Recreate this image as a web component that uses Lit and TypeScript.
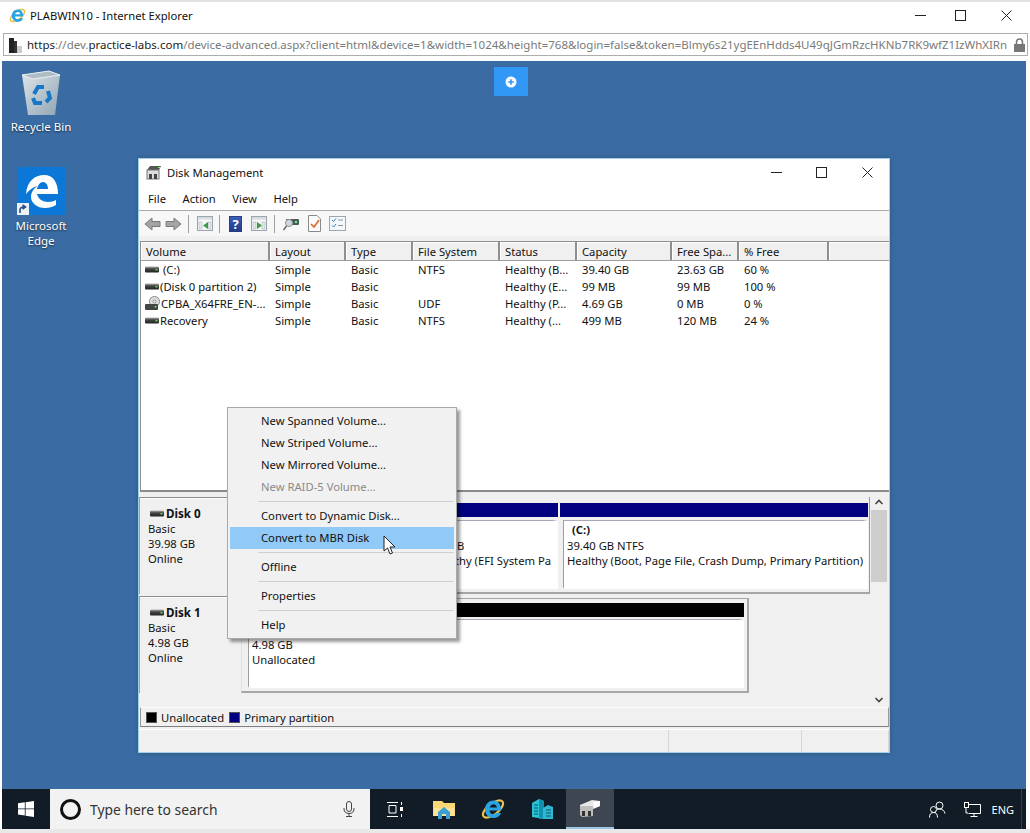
import { LitElement, html, css } from "lit";
import { customElement } from "lit/decorators.js";

const diskIcon = html`<svg class="dk" width="14" height="7" viewBox="0 0 14 7"><defs><linearGradient id="dg" x1="0" y1="0" x2="0" y2="1"><stop offset="0" stop-color="#b5b5b5"/><stop offset=".4" stop-color="#444"/><stop offset="1" stop-color="#222"/></linearGradient></defs><rect width="14" height="6" y=".5" rx="1" fill="url(#dg)"/><rect x="10.5" y="3" width="2" height="1.5" fill="#5fd35f"/></svg>`;
const ieLogo = (s: number) => html`<svg width=${s} height=${s} viewBox="0 0 24 24"><ellipse cx="12" cy="12" rx="12" ry="5.5" transform="rotate(-38 12 12)" fill="none" stroke="#e8c24a" stroke-width="2.2"/><path d="M4.5 13.4 H20 C20.3 7 16.8 3.5 12.5 3.5 C7.5 3.5 4 7.5 4 12.5 C4 17.5 7.7 21 12.5 21 C16 21 18.8 19.3 20 16 H15 C14.3 17 13.5 17.3 12.4 17.3 C10 17.3 8.6 15.6 8.6 13.4 Z M8.8 10.4 C9 8.6 10.5 7.2 12.4 7.2 C14.4 7.2 15.8 8.6 15.9 10.4 Z" fill="#2aa3e3" fill-rule="evenodd"/></svg>`;
const winIcon = (fill: string, arrow: string) => html`<svg width="16" height="15" viewBox="0 0 16 15"><rect x=".5" y=".5" width="15" height="14" fill="#f7f7f7" stroke="#9aa5ac"/><rect x="1" y="1" width="14" height="2.5" fill="#d6dde2"/><rect x="2" y="6" width="3" height="7" fill="#e2e8ec" stroke="#a3aeb5" stroke-width=".5"/><rect x="11" y="6" width="3" height="7" fill="#e2e8ec" stroke="#a3aeb5" stroke-width=".5"/><path d=${arrow} fill=${fill}/></svg>`;

const volumes = [
  { icon: "d", name: " (C:)", layout: "Simple", type: "Basic", fs: "NTFS", status: "Healthy (B...", cap: "39.40 GB", free: "23.63 GB", pct: "60 %" },
  { icon: "d", name: "(Disk 0 partition 2)", layout: "Simple", type: "Basic", fs: "", status: "Healthy (E...", cap: "99 MB", free: "99 MB", pct: "100 %" },
  { icon: "c", name: "CPBA_X64FRE_EN-...", layout: "Simple", type: "Basic", fs: "UDF", status: "Healthy (P...", cap: "4.69 GB", free: "0 MB", pct: "0 %" },
  { icon: "d", name: "Recovery", layout: "Simple", type: "Basic", fs: "NTFS", status: "Healthy (...", cap: "499 MB", free: "120 MB", pct: "24 %" },
];
const columns = ["Volume", "Layout", "Type", "File System", "Status", "Capacity", "Free Spa...", "% Free", ""];

@customElement("app-root")
export class AppRoot extends LitElement {
  static styles = css`
    :host { display: flex; flex-direction: column; width: 1030px; height: 833px; overflow: hidden; background: #fff; font-family: "Noto Sans", "Open Sans", sans-serif; font-size: 11.25px; color: #111; }
    * { box-sizing: border-box; }
    svg { display: block; flex: none; }
    .ietitle { height: 30px; flex: none; border-top: 2px solid #e2e2e2; display: flex; align-items: center; padding: 0 0 2px 9px; }
    .ietitle .t { margin-left: 4px; flex: 1; }
    .winbtns { display: flex; align-items: center; }
    .ietitle .winbtns { margin-right: 18px; }
    .ietitle .winbtns .b2 { margin: 0 35px 0 29px; }
    .addr { flex: none; height: 23px; margin: 3px 2px 0 3px; border: 1px solid #adadad; display: flex; align-items: center; padding-left: 4px; white-space: nowrap; font-size: 11.5px; color: #7a7a7a; overflow: hidden; }
    .addr .fav { width: 14px; height: 16px; margin-right: 5px; flex: none; }
    .addr .url { flex: 1; overflow: hidden; }
    .addr b { font-weight: 400; color: #222; }
    .addr .lock { margin: 0 2px 0 4px; }
    .gap6 { height: 5px; flex: none; }
    .desktop { position: relative; flex: 1; margin: 0 4px 0 2px; background: #3a6ca3; }
    .rdp { position: absolute; left: 492px; top: 6px; width: 34px; height: 29px; background: #3298f6; display: flex; align-items: center; justify-content: center; }
    .dicon { position: absolute; color: #fff; text-align: center; line-height: 15px; text-shadow: 0 1px 2px #000a; font-size: 11.5px; display: flex; flex-direction: column; align-items: center; }
    .dicon.bin { left: 4px; top: 9px; width: 70px; }
    .dicon.bin svg { margin-bottom: 2px; }
    .dicon.edge { left: 4px; top: 106px; width: 70px; }
    .dicon.edge .tile { width: 48px; height: 48px; margin-bottom: 3px; position: relative; background: #0b78d7; }
    .short { position: absolute; left: 0; bottom: 0; }

    .window { position: absolute; left: 136px; top: 97px; width: 752px; height: 595px; background: #f0f0f0; border: 1px solid #a5cfe8; display: flex; flex-direction: column; box-shadow: 0 0 6px #0003; }
    .wtitle { flex: none; height: 27px; background: #fff; display: flex; align-items: center; padding-left: 7px; }
    .wtitle .t { margin-left: 5px; flex: 1; }
    .wtitle .winbtns { margin-right: 16px; }
    .wtitle .winbtns .b2 { margin: 0 35px 0 34px; }
    .menubar { flex: none; height: 25px; background: #fff; border-bottom: 1px solid #a9a9a9; display: flex; align-items: center; padding: 0 0 0 9px; gap: 16.5px; }
    .toolbar { flex: none; height: 25px; background: #f7f7f7; display: flex; align-items: center; padding-left: 5px; }
    .tsep { width: 1px; height: 18px; background: #a0a0a0; }
    .toolbar .help { width: 13px; height: 16px; background: linear-gradient(#3b5db8, #233a88); color: #fff; font-weight: 700; font-size: 13px; line-height: 15px; text-align: center; flex: none; border: 1px solid #28407f; }
    .spacer5 { flex: none; height: 5px; }
    .list { flex: none; height: 251px; margin: 0 0 0 1px; background: #fff; border-top: 1px solid #8e8e8e; border-left: 1px solid #8e8e8e; border-bottom: 2px solid #8a8a8a; position: relative; }
    .cols { display: grid; grid-template-columns: 129px 76px 67px 87px 77px 95px 67px 90px 1fr; }
    .head > div { height: 19px; background: #f0f0f0; border-right: 2px solid #8f8f8f; border-bottom: 1px solid #a0a0a0; box-shadow: inset 1px 1px 0 #fff; padding: 2px 0 0 5px; line-height: 16px; white-space: nowrap; }
    .head > div:last-child { border-right: 0; }
    .row > div { height: 17px; line-height: 17px; padding-left: 5px; white-space: pre; }
    .row > div:first-child { padding-left: 4px; display: flex; align-items: center; gap: 1px; }
    .graph { flex: none; height: 215px; display: flex; }
    .disks { flex: 1; padding-top: 5px; min-width: 0; }
    .drow { display: flex; height: 97px; }
    .drow + .drow { margin-top: 2px; }
    .dlabel { width: 102px; flex: none; border-top: 1px solid #8e8e8e; border-left: 1px solid #a0a0a0; box-shadow: inset 0 1px 0 #fff; padding: 8px 0 0 8px; line-height: 15px; }
    .dlabel .name { font-weight: 700; display: flex; align-items: center; gap: 2px; margin: 0 0 0 2px; height: 15px; font-size: 11.6px; }
    .parts { flex: 1; min-width: 0; display: flex; border-right: 1px solid #9a9a9a; border-bottom: 2px solid #a6a6a6; padding: 6px 1px 3px 6px; gap: 2px; }
    .parts.d1 { flex: none; width: 508px; margin-top: 2px; border-top: 1px solid #a6a6a6; border-right: 2px solid #a6a6a6; border-left: 1px solid #e0e0e0; padding: 4px 3px 3px 6px; }
    .part { display: flex; flex-direction: column; min-width: 0; }
    .p1 { width: 170px; }
    .p2 { width: 139px; }
    .p3 { flex: 1; }
    .phead { height: 14px; background: #000080; flex: none; }
    .parts.d1 .phead { background: #000; }
    .pbody { flex: 1; margin: 3px 0 0 3px; border: solid #fff; border-width: 1px 5px 2px 1px; border-top-color: #a8a8b8; border-left-color: #9c9c9c; background: #fff; padding: 1px 0 0 3px; line-height: 15.5px; white-space: nowrap; overflow: hidden; min-width: 0; }
    .p2 .pbody { padding-left: 8px; }
    .parts.d1 .pbody { margin: 2px 0 0; }
    .pbody .bold { font-weight: 700; padding-left: 5px; }
    .scroll { width: 18px; flex: none; margin-right: 1px; display: flex; flex-direction: column; align-items: center; padding-top: 6px; }
    .thumb { width: 16px; height: 72px; background: #cdcdcd; margin: 4px 0 auto; }
    .legend { flex: none; height: 20px; margin-left: 1px; border-top: 1px solid #fff; border-bottom: 1px solid #7f7f7f; border-left: 1px solid #9a9a9a; border-right: 1px solid #9a9a9a; display: flex; align-items: center; padding-left: 5px; }
    .sw { width: 11px; height: 11px; margin-right: 4px; border: 1px solid #555; flex: none; }
    .sw.k { background: #000; }
    .sw.b { background: #000080; margin-left: 5px; }
    .status { flex: 1; margin-top: 2px; display: grid; grid-template-columns: 530px 133px 1fr; border-top: 1px solid #fff; }
    .status div { border-right: 1px solid #d6d6d6; }

    .menu { position: absolute; left: 88px; top: 248px; width: 230px; height: 232px; background: #f1f1f1; border: 1px solid #a9a9a9; box-shadow: 3px 3px 3px #0006; padding: 2px; z-index: 2; }
    .mi { height: 22px; line-height: 22px; padding-left: 31px; white-space: nowrap; }
    .mi.dis { color: #8a8a8a; }
    .mi.hot { background: #91c9f7; line-height: 21px; }
    .msep { height: 1px; background: #cfcfcf; margin: 3px 0 3px 28px; }
    .cursor { position: absolute; left: 244px; top: 376px; z-index: 3; }

    .taskbar { flex: none; height: 40px; margin: 0 4px 0 2px; background: #111c27; display: flex; align-items: center; position: relative; }
    .start { width: 48px; display: flex; justify-content: center; }
    .search { width: 320px; height: 40px; background: #f2f2f2; display: flex; align-items: center; padding-left: 9px; font-size: 13.85px; color: #333; }
    .search .txt { margin-left: 8px; flex: 1; }
    .search .mic { margin-right: 15px; }
    .tb { display: flex; justify-content: center; align-items: center; height: 40px; width: 49px; flex: none; }
    .tb.active { background: #3e4651; width: 48px; border-bottom: 2px solid #9cc8e6; }
    .tray { margin-left: auto; display: flex; align-items: center; color: #fff; font-size: 11px; padding-right: 12px; }
    .tray .net { margin: 0 11px 0 18px; }
    .tsplit { position: absolute; right: 4px; top: 0; width: 1px; height: 40px; background: #333e4a; }
    .bottom { height: 4px; flex: none; background: #e8e8e8; }
  `;

  private winBtns(stroke: string) {
    return html`<div class="winbtns">
      <svg width="11" height="11" viewBox="0 0 11 11"><path d="M0 5.5H11" stroke=${stroke}/></svg>
      <svg class="b2" width="11" height="11" viewBox="0 0 11 11"><rect x=".5" y=".5" width="10" height="10" fill="none" stroke=${stroke}/></svg>
      <svg width="11" height="11" viewBox="0 0 11 11"><path d="M.5 .5L10.5 10.5M10.5 .5L.5 10.5" stroke=${stroke}/></svg>
    </div>`;
  }

  render() {
    return html`
      <div class="ietitle">${ieLogo(17)}<span class="t">PLABWIN10 - Internet Explorer</span>${this.winBtns("#222")}</div>
      <div class="addr">
        <svg class="fav" viewBox="0 0 14 16"><rect x="1" y="1" width="5" height="15" fill="#222"/><rect x="6" y="4" width="3" height="12" fill="#333"/><rect x="9" y="9" width="5" height="7" fill="#ccc"/></svg>
        <span class="url"><b>https</b>://dev.<b>practice-labs.com</b>/device-advanced.aspx?client=html&amp;device=1&amp;width=1024&amp;height=768&amp;login=false&amp;token=Blmy6s21ygEEnHdds4U49qJGmRzcHKNb7RK9wfZ1IzWhXIRn</span>
        <svg class="lock" width="11" height="14" viewBox="0 0 11 14"><path d="M2.5 6V4a3 3 0 0 1 6 0v2" fill="none" stroke="#777" stroke-width="1.6"/><rect y="6" width="11" height="8" fill="#777"/></svg>
      </div>
      <div class="gap6"></div>
      <div class="desktop">
        <div class="rdp"><svg width="12" height="12" viewBox="0 0 12 12"><circle cx="6" cy="6" r="5.5" fill="#fff"/><path d="M3.2 6H8.8M6 3.2V8.8" stroke="#3298f6" stroke-width="1.6"/></svg></div>
        <div class="dicon bin">
          <svg width="40" height="47" viewBox="0 0 40 47"><defs><linearGradient id="rb" x1="0" y1="0" x2="1" y2="1"><stop offset="0" stop-color="#dfe6ea"/><stop offset="1" stop-color="#8fa4b3"/></linearGradient></defs><path d="M1 5 L28 1 L39 5 L34 45 L7 45 Z" fill="url(#rb)"/><path d="M1 5 L28 1 L39 5 L12 9 Z" fill="#aebcc6" stroke="#e9eef1"/><g fill="none" stroke="#1878c8" stroke-width="4"><path d="M13 24 L17 17 L23 17"/><path d="M27 21 L29 28 L25 32"/><path d="M21 33 L14 33 L12 28"/></g></svg>
          <span>Recycle Bin</span>
        </div>
        <div class="dicon edge">
          <div class="tile">
            <svg width="48" height="48" viewBox="0 0 48 48"><path d="M9 27 C10 14 18 8 27 8 C36 8 41 15 41 27 H20 C21 32 26 35 31 35 C34 35 37 34 39 33 V38 C36 40 32 41 28 41 C20 41 14 36 14 30 C14 25 17 21 21 19 C16 20 12 23 9 27 Z M20 22 H31 C31 18 29 15 26 15 C23 15 21 18 20 22 Z" fill="#fff" fill-rule="evenodd"/></svg>
            <svg class="short" width="12" height="12" viewBox="0 0 12 12"><rect width="12" height="12" fill="#eef1f4"/><path d="M3 10 V7 C3 5 5 4 7 4 M5.5 2 L8.5 4 L5.5 6" fill="none" stroke="#2a4f88" stroke-width="1.6"/></svg>
          </div>
          <span>Microsoft<br />Edge</span>
        </div>

        <div class="window">
          <div class="wtitle">
            <svg width="16" height="15" viewBox="0 0 16 15"><path d="M1 5 L4 1 H15 L13 5 Z" fill="#555"/><rect x="1" y="5" width="12" height="9" fill="#ddd" stroke="#777"/><rect x="3" y="9" width="3" height="5" fill="#444"/><rect x="8" y="9" width="3" height="5" fill="#444"/><rect x="12" y="2" width="2" height="1" fill="#7f7"/></svg>
            <span class="t">Disk Management</span>
            ${this.winBtns("#222")}
          </div>
          <div class="menubar"><span>File</span><span>Action</span><span>View</span><span>Help</span></div>
          <div class="toolbar">
            <svg width="17" height="14" viewBox="0 0 17 14"><path d="M8 1 L1 7 L8 13 V9.5 H16 V4.5 H8 Z" fill="#a4a4a4" stroke="#7a7a7a"/></svg>
            <svg style="margin-left:4px" width="17" height="14" viewBox="0 0 17 14"><path d="M9 1 L16 7 L9 13 V9.5 H1 V4.5 H9 Z" fill="#a4a4a4" stroke="#7a7a7a"/></svg>
            <span class="tsep" style="margin:0 8px 0 6px"></span>
            ${winIcon("#3d9a4a", "M11 6 V13 L6 9.5 Z")}
            <span class="tsep" style="margin:0 9px 0 6px"></span>
            <span class="help">?</span>
            <span style="margin-left:9px">${winIcon("#3d9a4a", "M6 6 V13 L11 9.5 Z")}</span>
            <span class="tsep" style="margin:0 8px 0 7px"></span>
            <svg width="16" height="15" viewBox="0 0 16 15"><rect x="3" y="3" width="13" height="6" rx="1" fill="#4c5a5a"/><rect x="12" y="5" width="2" height="2" fill="#6f6"/><circle cx="6" cy="7" r="3.5" fill="#cfd8dc" stroke="#8a9499"/><path d="M3.5 10 L0.5 14" stroke="#666" stroke-width="1.5"/></svg>
            <svg style="margin-left:9px" width="13" height="17" viewBox="0 0 13 17"><path d="M.5 .5H9L12.5 4V16.5H.5Z" fill="#fbfbfb" stroke="#8a8a8a"/><path d="M3 9 L6 12 L11 5" fill="none" stroke="#dc6a2c" stroke-width="1.7"/></svg>
            <svg style="margin-left:8px" width="17" height="15" viewBox="0 0 17 15"><rect x=".5" y=".5" width="16" height="14" fill="#f5f8fb" stroke="#9aa7b0"/><path d="M3 4 L4.5 5.5 L7 2.5 M3 9.5 L4.5 11 L7 8" fill="none" stroke="#3b7fb8"/><path d="M9 4H14M9 9.5H14" stroke="#8a9aa5"/></svg>
          </div>
          <div class="spacer5"></div>
          <div class="list">
            <div class="cols head">${columns.map((c) => html`<div>${c}</div>`)}</div>
            ${volumes.map(
              (v) => html`<div class="cols row">
                <div>${v.icon === "c"
                  ? html`<svg width="15" height="15" viewBox="0 0 15 15"><circle cx="9.5" cy="5.5" r="5" fill="#ddd" stroke="#888"/><circle cx="9.5" cy="5.5" r="1.5" fill="#fff" stroke="#888"/><rect y="8" width="13" height="6" rx="1" fill="#444"/><rect x="9.5" y="10" width="2" height="1.5" fill="#6d6"/></svg>`
                  : diskIcon}<span>${v.name}</span></div>
                <div>${v.layout}</div><div>${v.type}</div><div>${v.fs}</div><div>${v.status}</div><div>${v.cap}</div><div>${v.free}</div><div>${v.pct}</div><div></div>
              </div>`
            )}
          </div>
          <div class="graph">
            <div class="disks">
              <div class="drow">
                <div class="dlabel">
                  <div class="name">${diskIcon}<span>Disk 0</span></div>
                  <div>Basic</div><div>39.98 GB</div><div>Online</div>
                </div>
                <div class="parts">
                  <div class="part p1"><div class="phead"></div><div class="pbody"></div></div>
                  <div class="part p2"><div class="phead"></div><div class="pbody"><div>&nbsp;</div><div>99 MB</div><div>Healthy (EFI System Pa</div></div></div>
                  <div class="part p3"><div class="phead"></div><div class="pbody"><div class="bold">(C:)</div><div>39.40 GB NTFS</div><div>Healthy (Boot, Page File, Crash Dump, Primary Partition)</div></div></div>
                </div>
              </div>
              <div class="drow">
                <div class="dlabel">
                  <div class="name">${diskIcon}<span>Disk 1</span></div>
                  <div>Basic</div><div>4.98 GB</div><div>Online</div>
                </div>
                <div class="parts d1">
                  <div class="part p3"><div class="phead"></div><div class="pbody"><div>&nbsp;</div><div>4.98 GB</div><div>Unallocated</div></div></div>
                </div>
              </div>
            </div>
            <div class="scroll">
              <svg width="10" height="8" viewBox="0 0 10 8"><path d="M1.5 6 L5 2.5 L8.5 6" fill="none" stroke="#444" stroke-width="1.6"/></svg>
              <div class="thumb"></div>
              <svg style="margin-bottom:3px" width="10" height="8" viewBox="0 0 10 8"><path d="M1.5 2 L5 5.5 L8.5 2" fill="none" stroke="#444" stroke-width="1.6"/></svg>
            </div>
          </div>
          <div class="legend"><span class="sw k"></span><span>Unallocated</span><span class="sw b"></span><span>Primary partition</span></div>
          <div class="status"><div></div><div></div><div></div></div>

          <div class="menu">
            <div class="mi">New Spanned Volume...</div>
            <div class="mi">New Striped Volume...</div>
            <div class="mi">New Mirrored Volume...</div>
            <div class="mi dis">New RAID-5 Volume...</div>
            <div class="msep"></div>
            <div class="mi">Convert to Dynamic Disk...</div>
            <div class="mi hot">Convert to MBR Disk</div>
            <div class="msep"></div>
            <div class="mi">Offline</div>
            <div class="msep"></div>
            <div class="mi">Properties</div>
            <div class="msep"></div>
            <div class="mi">Help</div>
          </div>
          <svg class="cursor" width="14" height="20" viewBox="0 0 14 20"><path d="M1 1 V16 L4.5 13 L7 19 L9.5 18 L7 12 H12 Z" fill="#fff" stroke="#222"/></svg>
        </div>
      </div>
      <div class="taskbar">
        <div class="start"><svg width="16" height="16" viewBox="0 0 16 16"><path d="M0 2.3 L6.8 1.3 V7.5 H0 Z M7.6 1.2 L16 0 V7.5 H7.6 Z M0 8.3 H6.8 V14.6 L0 13.6 Z M7.6 8.3 H16 V16 L7.6 14.8 Z" fill="#fff"/></svg></div>
        <div class="search">
          <svg width="23" height="23" viewBox="0 0 23 23"><circle cx="11.5" cy="11.5" r="9" fill="none" stroke="#111" stroke-width="3"/></svg>
          <span class="txt">Type here to search</span>
          <svg class="mic" width="12" height="16" viewBox="0 0 12 16"><rect x="3.5" y=".5" width="5" height="10" rx="2.5" fill="none" stroke="#444"/><path d="M1 7 V8 C1 11 3 12.5 6 12.5 C9 12.5 11 11 11 8 V7 M6 12.5 V15.5 M3 15.5 H9" fill="none" stroke="#444"/></svg>
        </div>
        <div class="tb"><svg width="16" height="15" viewBox="0 0 16 15"><path d="M0 .5H11M0 14.5H11M2 3.5H9V11H2ZM14.5 0V3M14.5 12V15" fill="none" stroke="#fff"/><rect x="13" y="5" width="3" height="4" fill="#fff"/></svg></div>
        <div class="tb"><svg width="22" height="20" viewBox="0 0 22 20"><path d="M0 2 H9 L11 4 H22 V17 H0 Z" fill="#f9d776"/><path d="M1 17 V9 H21 V17 Z" fill="#fbe29a"/><path d="M5 20 V13 L11 8 L17 13 V20 H13 V15 H9 V20 Z" fill="#3aa0d4"/></svg></div>
        <div class="tb">${ieLogo(24)}</div>
        <div class="tb"><svg width="22" height="22" viewBox="0 0 22 22"><path d="M1 5 L8 1 L13 3 V21 L1 19 Z" fill="#29c2d6"/><path d="M13 3 L8 1 V21 L13 21 Z" fill="#1390ac"/><path d="M12 10 L17 7 L22 9 V21 H12 Z" fill="#2fb8d4"/><path d="M3 7H7M3 10H7M3 13H7M3 16H7M15 12H20M15 15H20M15 18H20" stroke="#0b5566" stroke-width="1.2"/></svg></div>
        <div class="tb active"><svg width="22" height="20" viewBox="0 0 22 20"><path d="M1 7 L13 2 L21 3 L21 8 L10 13 L1 11 Z" fill="#e8e8e8"/><path d="M14 4 L21 3 V8 L15 10 Z" fill="#fff"/><path d="M1 8 H14 V18 L3 19 L1 17 Z" fill="#bdbdbd"/><rect x="3" y="13" width="3" height="5" fill="#333"/><rect x="9" y="13" width="3" height="5" fill="#333"/></svg></div>
        <div class="tray">
          <svg width="17" height="17" viewBox="0 0 17 17"><circle cx="10.5" cy="4.5" r="3.5" fill="none" stroke="#fff"/><path d="M6 12 C6 9 8 8 10.5 8 C13 8 15.5 9.5 16 12.5" fill="none" stroke="#fff"/><circle cx="4.5" cy="8.5" r="3" fill="#111c27" stroke="#fff"/><path d="M.5 16.5 C.5 13 2 11.5 4.5 11.5 C7 11.5 8.5 13 8.5 16.5" fill="none" stroke="#fff"/></svg>
          <svg class="net" width="17" height="15" viewBox="0 0 17 15"><path d="M4.5 2.5 H16.5 V11.5 H4.5 M10 11.5 V14.5 M6.5 14.5 H13.5 M2 6 V11 M2 11 H4" fill="none" stroke="#fff"/><rect x=".5" y=".5" width="4" height="5" fill="#111c27" stroke="#fff"/></svg>
          <span class="eng">ENG</span>
        </div>
        <div class="tsplit"></div>
      </div>
      <div class="bottom"></div>
    `;
  }
}
